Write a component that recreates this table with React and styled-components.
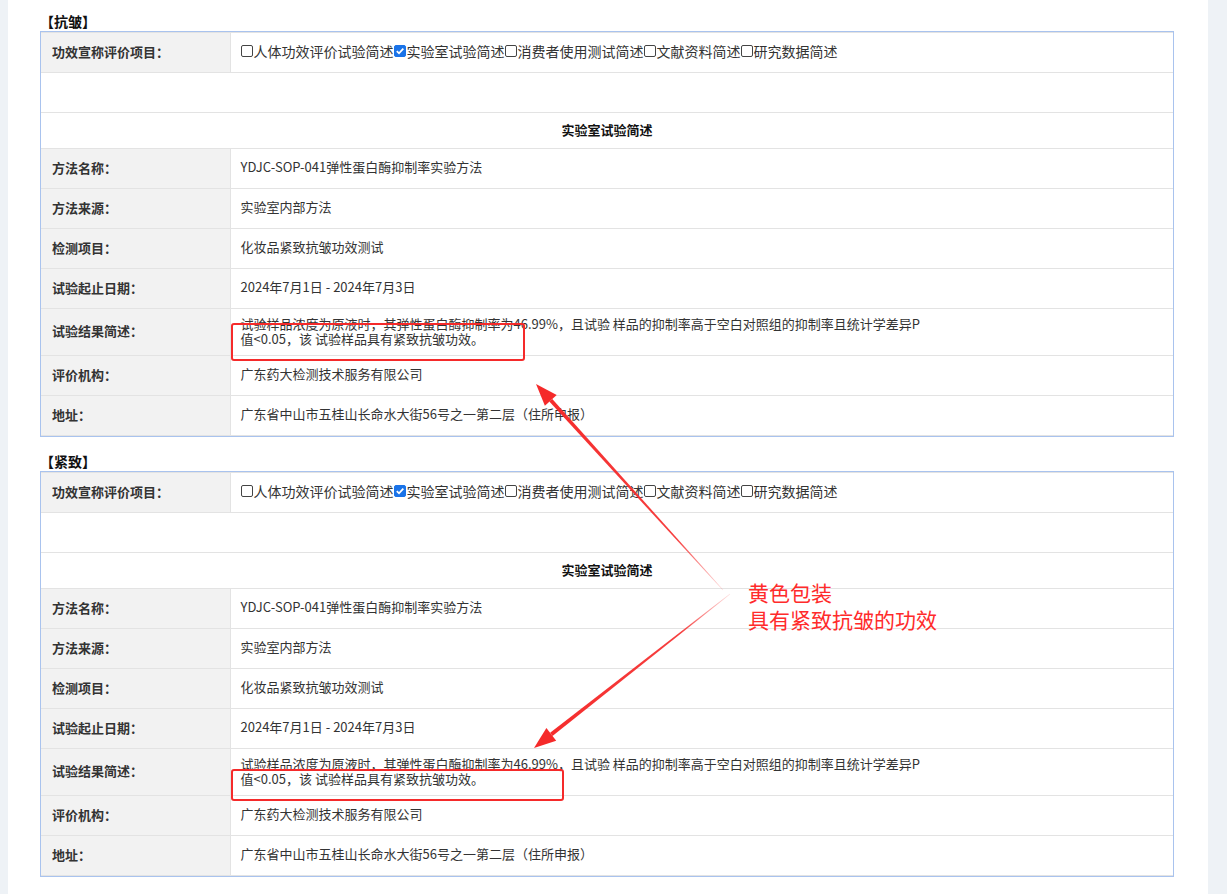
import styled, { createGlobalStyle } from 'styled-components';

const GlobalStyle = createGlobalStyle`
  html, body {
    margin: 0;
    padding: 0;
    background: #eef2f6;
    font-family: 'Noto Sans CJK SC', 'Noto Sans', sans-serif;
    color: #333;
  }
`;

const Page = styled.div`
  position: relative;
  min-height: 100vh;
`;

const Panel = styled.main`
  margin-left: 8px;
  width: 1200px;
  min-height: 100vh;
  box-sizing: border-box;
  background: #fff;
  padding: 11px 34px 16px 32px;
`;

const Section = styled.section`
  & + & {
    margin-top: 14px;
  }
`;

const Heading = styled.h3`
  margin: 0;
  font-size: 14px;
  line-height: 20px;
  font-weight: 700;
  color: #111;
`;

const TableBox = styled.div`
  border: 1px solid #a9c3ee;
`;

const Table = styled.table`
  width: 100%;
  border-collapse: collapse;
  table-layout: fixed;
  font-size: 13px;
`;

const Row = styled.tr`
  height: ${(p) => p.$h || 40}px;
`;

const Label = styled.th`
  width: 189px;
  box-sizing: border-box;
  background: #f2f2f2;
  border: 1px solid #e3e3e3;
  border-left: none;
  text-align: left;
  padding: 0 0 3px 11px;
  font-weight: 700;
  color: #333;
`;

const Value = styled.td`
  border: 1px solid #e3e3e3;
  border-right: none;
  padding: 0 10px 3px;
  color: #333;
  line-height: ${(p) => (p.$tight ? '15px' : '20px')};
`;

const Wide = styled.td`
  border: 1px solid #e3e3e3;
  border-left: none;
  border-right: none;
  padding-bottom: 3px;
  text-align: center;
  font-weight: 700;
  color: #111;
`;

const Checks = styled.div`
  display: flex;
  align-items: center;
  font-size: 14px;
  color: #333;
`;

const Box = styled.span`
  display: inline-flex;
  align-items: center;
  justify-content: center;
  width: 12px;
  height: 12px;
  box-sizing: border-box;
  border-radius: 2px;
  margin-right: 1px;
  border: 1px solid ${(p) => (p.$on ? '#1a73e8' : '#444')};
  background: ${(p) => (p.$on ? '#1a73e8' : '#fff')};
`;

const Overlay = styled.svg`
  position: absolute;
  left: 0;
  top: 0;
  pointer-events: none;
`;

const Note = styled.div`
  position: absolute;
  left: 748px;
  top: 579px;
  font-size: 21px;
  line-height: 27px;
  color: #ff2b2b;
`;

const options = ['人体功效评价试验简述', '实验室试验简述', '消费者使用测试简述', '文献资料简述', '研究数据简述'];

const rows = [
  ['方法名称：', 'YDJC-SOP-041弹性蛋白酶抑制率实验方法'],
  ['方法来源：', '实验室内部方法'],
  ['检测项目：', '化妆品紧致抗皱功效测试'],
  ['试验起止日期：', '2024年7月1日 - 2024年7月3日'],
];

const tail = [
  ['评价机构：', '广东药大检测技术服务有限公司'],
  ['地址：', '广东省中山市五桂山长命水大街56号之一第二层（住所申报）'],
];

const Check = ({ on }) => (
  <Box $on={on}>
    {on && (
      <svg width="10" height="10" viewBox="0 0 10 10">
        <path d="M1.8 5.2 L4 7.3 L8.3 2.6" fill="none" stroke="#fff" strokeWidth="1.8" />
      </svg>
    )}
  </Box>
);

const Block = ({ title }) => (
  <Section>
    <Heading>【{title}】</Heading>
    <TableBox>
      <Table>
        <tbody>
          <Row>
            <Label>功效宣称评价项目：</Label>
            <Value>
              <Checks>
                {options.map((o, i) => (
                  <span key={o} style={{ display: 'contents' }}>
                    <Check on={i === 1} />
                    {o}
                  </span>
                ))}
              </Checks>
            </Value>
          </Row>
          <Row>
            <Wide colSpan={2} />
          </Row>
          <Row $h={36}>
            <Wide colSpan={2}>实验室试验简述</Wide>
          </Row>
          {rows.map(([k, v]) => (
            <Row key={k}>
              <Label>{k}</Label>
              <Value>{v}</Value>
            </Row>
          ))}
          <Row $h={47}>
            <Label>试验结果简述：</Label>
            <Value $tight>
              试验样品浓度为原液时，其弹性蛋白酶抑制率为46.99%，且试验 样品的抑制率高于空白对照组的抑制率且统计学差异P
              <br />
              值&lt;0.05，该 试验样品具有紧致抗皱功效。
            </Value>
          </Row>
          {tail.map(([k, v]) => (
            <Row key={k}>
              <Label>{k}</Label>
              <Value>{v}</Value>
            </Row>
          ))}
        </tbody>
      </Table>
    </TableBox>
  </Section>
);

// tapered arrow from (x1,y1) to tip (x2,y2)
const Arrow = ({ x1, y1, x2, y2, id }) => {
  const dx = x2 - x1;
  const dy = y2 - y1;
  const len = Math.hypot(dx, dy);
  const ux = dx / len;
  const uy = dy / len;
  const nx = -uy;
  const ny = ux;
  const bx = x2 - 22 * ux;
  const by = y2 - 22 * uy;
  const pt = (x, y) => `${x.toFixed(1)},${y.toFixed(1)}`;
  const shaft = [
    pt(x1 + 0.3 * nx, y1 + 0.3 * ny),
    pt(bx + 2 * nx, by + 2 * ny),
    pt(bx - 2 * nx, by - 2 * ny),
    pt(x1 - 0.3 * nx, y1 - 0.3 * ny),
  ].join(' ');
  const head = [pt(x2, y2), pt(bx + 8 * nx, by + 8 * ny), pt(bx - 8 * nx, by - 8 * ny)].join(' ');
  return (
    <g>
      <defs>
        <linearGradient id={id} gradientUnits="userSpaceOnUse" x1={x1} y1={y1} x2={x2} y2={y2}>
          <stop offset="0" stopColor="#f52a2a" stopOpacity="0.15" />
          <stop offset="0.25" stopColor="#f52a2a" stopOpacity="0.9" />
          <stop offset="1" stopColor="#f52a2a" />
        </linearGradient>
      </defs>
      <polygon points={shaft} fill={`url(#${id})`} />
      <polygon points={head} fill="#f52a2a" />
    </g>
  );
};

const App = () => (
  <Page>
    <GlobalStyle />
    <Panel>
      <Block title="抗皱" />
      <Block title="紧致" />
    </Panel>
    <Overlay width="1227" height="894">
      <rect x="232" y="324" width="292" height="36" rx="2" fill="none" stroke="#f52a2a" strokeWidth="2" />
      <rect x="232" y="770" width="331" height="30" rx="2" fill="none" stroke="#f52a2a" strokeWidth="2" />
      <Arrow id="a1" x1={723} y1={590} x2={536} y2={384} />
      <Arrow id="a2" x1={730} y1={594} x2={534} y2={748} />
    </Overlay>
    <Note>
      黄色包装
      <br />
      具有紧致抗皱的功效
    </Note>
  </Page>
);

export default App;
